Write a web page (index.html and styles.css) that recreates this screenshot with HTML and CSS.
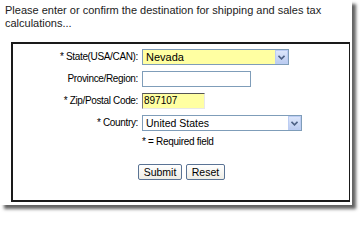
FILE: index.html
```html
<!DOCTYPE html>
<html>
<head>
<meta charset="utf-8">
<link rel="stylesheet" href="styles.css">
</head>
<body>
<div class="page">
  <p class="intro">Please enter or confirm the destination for shipping and sales tax calculations...</p>
  <form class="box">
    <div class="fields">
      <label class="lbl">* State(USA/CAN):</label>
      <div class="select yellow state"><span class="val">Nevada</span><span class="arrow"><svg width="7" height="5" viewBox="0 0 7 5"><path d="M0.5 0.8 L3.5 3.8 L6.5 0.8" fill="none" stroke="#4d6185" stroke-width="1.6"/></svg></span></div>
      <label class="lbl">Province/Region:</label>
      <div class="input province"></div>
      <label class="lbl">* Zip/Postal Code:</label>
      <div class="input inset yellow zip">897107</div>
      <label class="lbl">* Country:</label>
      <div class="select country"><span class="val">United States</span><span class="arrow"><svg width="7" height="5" viewBox="0 0 7 5"><path d="M0.5 0.8 L3.5 3.8 L6.5 0.8" fill="none" stroke="#4d6185" stroke-width="1.6"/></svg></span></div>
    </div>
    <div class="note">* = Required field</div>
    <div class="buttons">
      <button type="button" class="btn submit">Submit</button>
      <button type="button" class="btn reset">Reset</button>
    </div>
  </form>
</div>
</body>
</html>
```
FILE: styles.css
```css
html, body {
  margin: 0;
  padding: 0;
  background: #ffffff;
}
body {
  font-family: "Liberation Sans", Arial, sans-serif;
  color: #000;
  padding-bottom: 14px;
}
.page {
  width: 352px;
  height: 205px;
  background: #ffffff;
  box-shadow: 4px 4px 3px 0 rgba(60, 60, 60, 0.8);
  display: flex;
  flex-direction: column;
  box-sizing: border-box;
  padding-top: 4px;
}
.intro {
  margin: 0 0 0 5px;
  width: 330px;
  font-size: 11px;
  line-height: 13px;
  color: #222;
}
.box {
  margin: 12px 0 0 11px;
  width: 339px;
  height: 160px;
  box-sizing: border-box;
  border: 2px solid #1a1a1a;
  border-right-width: 1px;
  padding-top: 5px;
}
.fields {
  display: grid;
  grid-template-columns: 125px auto;
  column-gap: 4px;
  row-gap: 6px;
  align-items: center;
}
.lbl {
  text-align: right;
  font-size: 10px;
  letter-spacing: -0.35px;
  line-height: 16px;
  white-space: nowrap;
}
.select, .input {
  height: 16px;
  box-sizing: border-box;
  border: 1px solid #7f9db9;
  background: #fff;
  font-size: 10.5px;
  line-height: 14px;
  display: flex;
  align-items: center;
}
.yellow {
  background: #ffffa2;
}
.select .val {
  flex: 1;
  padding-left: 3px;
}
.select.state .val {
  font-size: 11px;
}
.arrow {
  width: 13px;
  height: 14px;
  box-sizing: border-box;
  border: 1px solid #bccdf3;
  background: linear-gradient(#dce6fb, #bcccf0);
  display: flex;
  align-items: center;
  justify-content: center;
}
.state {
  width: 147px;
}
.province {
  width: 109px;
}
.zip {
  width: 63px;
  border-top: 1px solid #555;
  border-left: 1px solid #777;
  border-right: 1px solid #e8e8e8;
  border-bottom: 1px solid #e8e8e8;
  padding-left: 1px;
  font-size: 10px;
}
.country {
  width: 160px;
}
.note {
  margin: 5px 0 0 129px;
  font-size: 10px;
  letter-spacing: -0.3px;
  line-height: 12px;
}
.buttons {
  display: flex;
  justify-content: center;
  gap: 4px;
  margin-top: 16px;
  padding-left: 1px;
}
.btn {
  height: 16px;
  padding: 0;
  box-sizing: border-box;
  border: 1px solid #5a7394;
  border-radius: 2px;
  background: linear-gradient(#ffffff, #eeede5);
  font-family: "Liberation Sans", Arial, sans-serif;
  font-size: 10.5px;
  line-height: 14px;
  color: #000;
}
.submit {
  width: 44px;
}
.reset {
  width: 39px;
}
```
